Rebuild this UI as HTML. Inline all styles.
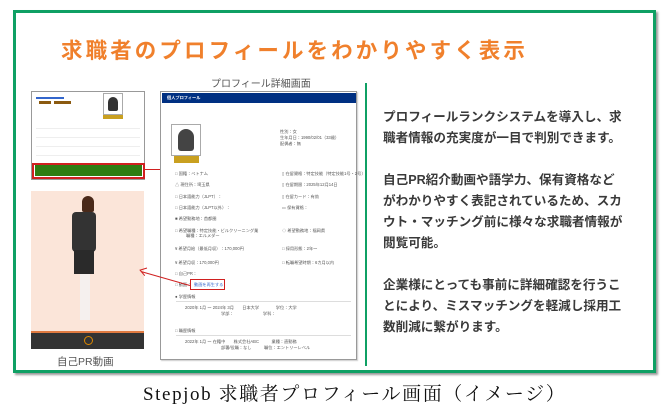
<!DOCTYPE html>
<html><head><meta charset="utf-8"><style>
*{margin:0;padding:0;box-sizing:border-box}
body{width:666px;height:409px;background:#fff;position:relative;overflow:hidden;font-family:"Liberation Sans","Noto Sans CJK JP",sans-serif}
.a{position:absolute}
.t{position:absolute;font-size:4.2px;color:#555;white-space:nowrap}
</style></head><body>
<div class="a" style="left:13px;top:10px;width:643px;height:363px;border:3px solid #0fa064;box-shadow:2px 2px 2px #999"></div>
<div class="a" style="left:61px;top:34px;font-size:21.5px;font-weight:bold;color:#f0802c;letter-spacing:3.1px;white-space:nowrap">求職者のプロフィールをわかりやすく表示</div>
<div class="a" style="left:365px;top:83px;width:2px;height:283px;background:#0fa064"></div>
<div class="a" style="left:383px;top:107px;font-size:12.6px;line-height:21px;color:#3a3a3a;font-weight:bold;white-space:nowrap">プロフィールランクシステムを導入し、求<br>職者情報の充実度が一目で判別できます。<br><br>自己PR紹介動画や語学力、保有資格など<br>がわかりやすく表記されているため、スカ<br>ウト・マッチング前に様々な求職者情報が<br>閲覧可能。<br><br>企業様にとっても事前に詳細確認を行うこ<br>とにより、ミスマッチングを軽減し採用工<br>数削減に繋がります。</div>
<div class="a" style="left:211px;top:75px;font-size:10px;color:#555;white-space:nowrap">プロフィール詳細画面</div>
<!-- left small screenshot -->
<div class="a" style="left:31px;top:91px;width:114px;height:89px;border:1px solid #999;background:#fff"></div>
<div class="a" style="left:36px;top:97px;width:28px;height:2px;background:#36c"></div>
<div class="a" style="left:39px;top:101px;width:12px;height:3px;background:#8b5a10"></div>
<div class="a" style="left:54px;top:101px;width:17px;height:3px;background:#8b5a10"></div>
<div class="a" style="left:103px;top:93px;width:20px;height:22px;border:1px solid #aaa;background:#fff"><div style="width:10px;height:14px;border-radius:5px 5px 2px 2px;background:#333;margin:3px auto"></div></div>
<div class="a" style="left:103px;top:115px;width:20px;height:4px;background:#c9a020"></div>
<div class="a" style="left:36px;top:120px;width:104px;height:40px;background:repeating-linear-gradient(#fff 0 8px,#eee 8px 9px)"></div>
<div class="a" style="left:32px;top:163px;width:113px;height:16px;border:2px solid #d02020"></div>
<div class="a" style="left:35px;top:165px;width:107px;height:11px;background:#2e7d12"></div>
<div class="a" style="left:144px;top:169px;width:60px;height:1px;background:#d02020"></div>
<svg class="a" style="left:198px;top:165px" width="10" height="9"><path d="M1 1 L8 4.5 L1 8" fill="none" stroke="#d02020" stroke-width="1"/></svg>
<!-- video -->
<div class="a" style="left:31px;top:191px;width:113px;height:140px;background:#fbe5d9"></div>
<div class="a" style="left:82px;top:196px;width:12px;height:16px;border-radius:6px 6px 2px 2px;background:#4a2a1a"></div>
<div class="a" style="left:72px;top:212px;width:24px;height:40px;background:#333;border-radius:4px"></div>
<div class="a" style="left:74px;top:250px;width:20px;height:24px;background:#2a2a2a"></div>
<div class="a" style="left:80px;top:274px;width:10px;height:46px;background:#f5f0ee"></div>
<div class="a" style="left:31px;top:331px;width:113px;height:2px;background:#e07a40"></div>
<div class="a" style="left:31px;top:333px;width:113px;height:16px;background:#333"></div>
<div class="a" style="left:84px;top:336px;width:9px;height:9px;border:1px solid #d80;border-radius:50%"></div>
<div class="a" style="left:57px;top:354px;font-size:10.5px;color:#555">自己PR動画</div>
<!-- middle screenshot -->
<div class="a" style="left:160px;top:91px;width:197px;height:269px;border:1px solid #999;background:#fff;box-shadow:1px 1px 1px #ccc"></div>
<div class="a" style="left:162px;top:93px;width:194px;height:10px;background:#003082"><span class="t" style="color:#fff;left:5px;top:2px;font-weight:bold">個人プロフィール</span></div>
<div class="a" style="left:171px;top:124px;width:30px;height:32px;border:1px solid #aaa"><div style="width:16px;height:22px;border-radius:8px 8px 3px 3px;background:#444;margin:4px auto"></div></div>
<div class="a" style="left:174px;top:156px;width:25px;height:7px;background:#c9a020"></div>
<div class="t" style="left:280px;top:129px;line-height:6px">性別：女<br>生年月日：1990/02/01（33歳）<br>配偶者：無</div>
<div class="t" style="left:175px;top:171px">□ 国籍：ベトナム</div>
<div class="t" style="left:175px;top:182px">△ 現住所：埼玉県</div>
<div class="t" style="left:175px;top:194px">□ 日本語能力（JLPT）：</div>
<div class="t" style="left:175px;top:205px">□ 日本語能力（JLPT以外）：</div>
<div class="t" style="left:175px;top:216px">■ 希望勤務地：首都圏</div>
<div class="t" style="left:175px;top:228px">□ 希望職種：特定技能・ビルクリーニング業</div>
<div class="t" style="left:186px;top:233px">職種：エルメダー</div>
<div class="t" style="left:175px;top:246px">¥ 希望月給（最低月収）：170,000円</div>
<div class="t" style="left:175px;top:260px">¥ 希望月収：170,000円</div>
<div class="t" style="left:175px;top:271px">□ 自己PR：</div>
<div class="t" style="left:175px;top:282px">□ 動画：</div>
<div class="t" style="left:282px;top:171px">▯ 在留資格：特定技能（特定技能1号・2号）</div>
<div class="t" style="left:282px;top:182px">▯ 在留期限：2025年12月14日</div>
<div class="t" style="left:282px;top:194px">▯ 在留カード：有効</div>
<div class="t" style="left:282px;top:205px">▭ 保有資格：</div>
<div class="t" style="left:282px;top:228px">◇ 希望勤務地：福岡県</div>
<div class="t" style="left:282px;top:246px">□ 採用形態：2年〜</div>
<div class="t" style="left:282px;top:260px">□ 転職希望時期：6カ月以内</div>
<div class="a" style="left:190px;top:279px;width:35px;height:11px;border:1px solid #d02020;background:#fff"><span class="t" style="color:#36c;left:3px;top:2px">動画を再生する</span></div>
<div class="a" style="left:141px;top:271px;width:51px;height:1px;background:#d02020;transform:rotate(16deg);transform-origin:0 0"></div>
<svg class="a" style="left:138px;top:266px" width="10" height="10"><path d="M8 1 L2 5 L8 9" fill="none" stroke="#d02020" stroke-width="1" transform="rotate(16 5 5)"/></svg>
<div class="t" style="left:175px;top:294px">● 学歴情報</div>
<div class="a" style="left:176px;top:301px;width:175px;height:1px;background:#ddd"></div>
<div class="t" style="left:185px;top:305px">2020年 1月 〜 2024年 3月　　日本大学　　　　学位：大学</div>
<div class="t" style="left:221px;top:311px">学部：　　　　　　　学科：</div>
<div class="t" style="left:175px;top:328px">□ 職歴情報</div>
<div class="a" style="left:176px;top:335px;width:175px;height:1px;background:#ddd"></div>
<div class="t" style="left:185px;top:339px">2022年 1月 〜 在籍中　　株式会社ABC　　　業種：直勤務</div>
<div class="t" style="left:221px;top:345px">部署/役職：なし　　　職位：エントリーレベル</div>
<div class="a" style="left:143px;top:379px;font-family:'Liberation Serif','Noto Serif CJK SC',serif;font-size:19px;letter-spacing:1.6px;color:#111;white-space:nowrap">Stepjob 求職者プロフィール画面（イメージ）</div>
</body></html>
